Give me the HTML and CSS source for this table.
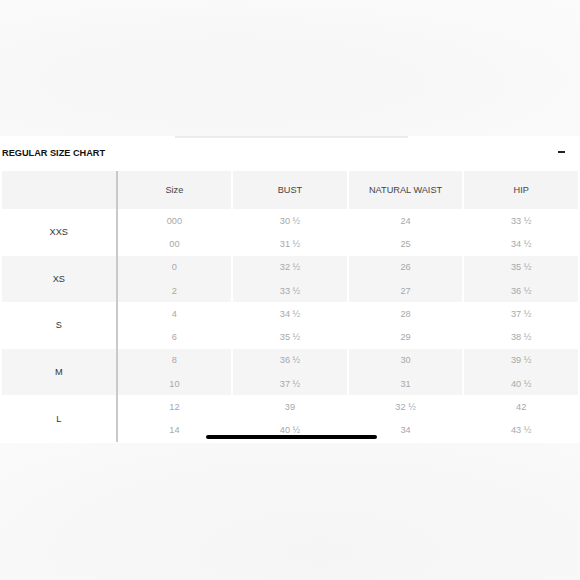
FILE: index.html
```html
<!DOCTYPE html>
<html>
<head>
<meta charset="utf-8">
<link rel="stylesheet" href="styles.css">
</head>
<body>
<div class="top"></div>
<section class="sheet">
  <div class="grabber"></div>
  <div class="title-row">
    <h2 class="title">REGULAR SIZE CHART</h2>
    <span class="minus"></span>
  </div>
  <table class="chart">
    <thead>
      <tr><th class="lab"></th><th>Size</th><th>BUST</th><th>NATURAL WAIST</th><th>HIP</th></tr>
    </thead>
    <tbody class="light">
      <tr><td class="lab" rowspan="2">XXS</td><td>000</td><td>30 ½</td><td>24</td><td>33 ½</td></tr>
      <tr><td>00</td><td>31 ½</td><td>25</td><td>34 ½</td></tr>
    </tbody>
    <tbody class="shade">
      <tr><td class="lab" rowspan="2">XS</td><td>0</td><td>32 ½</td><td>26</td><td>35 ½</td></tr>
      <tr><td>2</td><td>33 ½</td><td>27</td><td>36 ½</td></tr>
    </tbody>
    <tbody class="light">
      <tr><td class="lab" rowspan="2">S</td><td>4</td><td>34 ½</td><td>28</td><td>37 ½</td></tr>
      <tr><td>6</td><td>35 ½</td><td>29</td><td>38 ½</td></tr>
    </tbody>
    <tbody class="shade">
      <tr><td class="lab" rowspan="2">M</td><td>8</td><td>36 ½</td><td>30</td><td>39 ½</td></tr>
      <tr><td>10</td><td>37 ½</td><td>31</td><td>40 ½</td></tr>
    </tbody>
    <tbody class="light">
      <tr><td class="lab" rowspan="2">L</td><td>12</td><td>39</td><td>32 ½</td><td>42</td></tr>
      <tr><td>14</td><td>40 ½</td><td>34</td><td>43 ½</td></tr>
    </tbody>
  </table>
</section>
<div class="bottom"></div>
<div class="home-bar"></div>
</body>
</html>
```
FILE: styles.css
```css
html, body {
  margin: 0;
  padding: 0;
}
body {
  width: 580px;
  height: 580px;
  overflow: hidden;
  background: #f8f8f8;
  font-family: "Liberation Sans", Arial, sans-serif;
  position: relative;
}
.top {
  height: 136px;
  background: radial-gradient(ellipse at 40% 60%, #f6f6f6 0%, #f8f8f8 50%, #fbfbfb 100%);
}
.sheet {
  background: #ffffff;
  height: 307px;
}
.grabber {
  margin-left: 175px;
  width: 233px;
  height: 2px;
  background: #ebebeb;
}
.title-row {
  height: 30px;
  padding: 0 15px 3px 2px;
  display: flex;
  align-items: center;
  justify-content: space-between;
}
.title {
  margin: 0;
  font-size: 9.2px;
  font-weight: bold;
  color: #111;
}
.minus {
  display: block;
  width: 7px;
  height: 1.5px;
  background: #222;
  margin-top: -2px;
}
.chart {
  border-collapse: separate;
  border-spacing: 2px 0;
  width: 580px;
  table-layout: fixed;
  font-size: 9.2px;
}
.chart th {
  height: 38px;
  padding: 0;
  background: #f4f4f4;
  color: #444;
  font-weight: normal;
  text-align: center;
}
.chart td {
  height: 23.3px;
  padding: 0;
  text-align: center;
  color: #a8a8a8;
}
.chart td.lab {
  color: #333;
}
.chart .lab {
  box-shadow: 2px 0 0 #c9c9c9;
}
.shade td {
  background: #f5f5f5;
}
.light td {
  background: #ffffff;
}
.bottom {
  height: 137px;
  background: radial-gradient(ellipse at 55% 80%, #f5f5f5 0%, #f7f7f7 50%, #fafafa 100%);
}
.home-bar {
  position: absolute;
  left: 206px;
  top: 435px;
  width: 171px;
  height: 4px;
  border-radius: 2px;
  background: #000;
}
```
